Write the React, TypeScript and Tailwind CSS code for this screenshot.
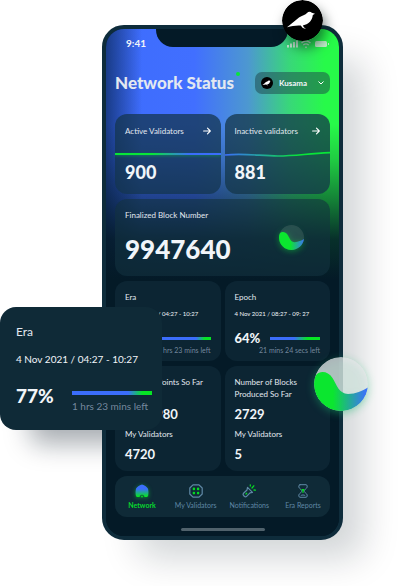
import React, { useId } from "react";

type BallProps = { className: string };

function Ball({ className }: BallProps) {
  const id = useId();
  return (
    <svg viewBox="0 0 54 54" className={className} aria-hidden="true">
      <defs>
        <linearGradient id={id} x1="0" y1="0" x2="1" y2="0">
          <stop offset="0.35" stopColor="#0be62f" />
          <stop offset="0.95" stopColor="#3b74f6" />
        </linearGradient>
      </defs>
      <circle cx="27" cy="27" r="27" fill="#e4e6e8" className="opacity-75" />
      <path
        d="M2 18C6 13.500 14 14 18.500 21C23 28.500 25 36.500 34 37C42 37 48 34 54 30.500C52 44 41 54 27 54C12 54 0 42 0 27C0 24 0.500 21 2 18Z"
        fill={`url(#${id})`}
      />
    </svg>
  );
}

function SmallBall({ className }: BallProps) {
  const id = useId();
  return (
    <svg viewBox="0 0 54 54" className={className} aria-hidden="true">
      <defs>
        <linearGradient id={id} x1="0" y1="0" x2="1" y2="0">
          <stop offset="0.45" stopColor="#0be62f" />
          <stop offset="1" stopColor="#3b74f6" />
        </linearGradient>
      </defs>
      <circle cx="27" cy="27" r="27" fill="#ffffff" className="opacity-10" />
      <path
        d="M2 18C6 13.500 14 14 18.500 21C23 28.500 25 36.500 34 37C42 37 48 34 54 30.500C52 44 41 54 27 54C12 54 0 42 0 27C0 24 0.500 21 2 18Z"
        fill={`url(#${id})`}
      />
    </svg>
  );
}

function Bird({ className }: { className: string }) {
  return (
    <svg viewBox="0 0 41 41" className={className} aria-hidden="true">
      <circle cx="20.500" cy="20.500" r="20.500" fill="#000" />
      <path
        d="M5 27.300L11.500 22L17 17.500C20 15.500 23.500 14.800 25 13C26.300 11.500 28.500 11.600 29.800 12.700L33 13.800L30.800 15C30.500 18.500 28.500 22.300 24.500 24.200L20.800 25.600L22 27.500L24 28.400L22.200 28.600L20.500 27.800L18.800 25.600C14.500 25.200 10 26 5 27.300Z"
        fill="#fff"
      />
    </svg>
  );
}

function Arrow() {
  return (
    <svg viewBox="0 0 8 8" className="size-2" fill="none" stroke="#fff" strokeWidth="1.1" strokeLinecap="round" strokeLinejoin="round" aria-hidden="true">
      <path d="M0.600 4H7.300M4.500 1.200L7.300 4L4.500 6.800" />
    </svg>
  );
}

function Bar({ className, green }: { className: string; green: "short" | "long" }) {
  return (
    <div
      className={`${className} ${
        green === "short"
          ? "bg-[linear-gradient(90deg,#3b6dfb_70%,#06e524_88%)]"
          : "bg-[linear-gradient(90deg,#3b6dfb_48%,#06e524_75%)]"
      }`}
    />
  );
}

function StatCard({ label, value, line, tint }: { label: string; value: string; line: React.ReactNode; tint: string }) {
  return (
    <section className={`h-20 rounded-xl px-[10px] pt-px ${tint}`}>
      <div className="flex h-8 items-center justify-between">
        <h2 className="text-[8px] text-slate-200">{label}</h2>
        <button type="button" aria-label={`Open ${label}`}>
          <Arrow />
        </button>
      </div>
      <div className="-mx-[10px] h-4">{line}</div>
      <p className="text-[18px] leading-[18px] font-black text-slate-100">{value}</p>
    </section>
  );
}

function TimeCard({ label, date, percent, left, green }: { label: string; date: string; percent: string; left: string; green: "short" | "long" }) {
  return (
    <section className="h-20 rounded-xl bg-[#0c2533] px-[10px] pt-[10px]">
      <h2 className="text-[8px] leading-3 text-slate-200">{label}</h2>
      <p className="mt-[6px] text-[6px] leading-[10px] whitespace-nowrap text-slate-100">{date}</p>
      <div className="mt-[11px] flex items-center justify-between">
        <p className="text-[13px] leading-4 font-black text-slate-100">{percent}</p>
        <Bar className="h-[3px] w-[50px]" green={green} />
      </div>
      <p className="text-right text-[7px] leading-[8px] whitespace-nowrap text-slate-400/80">{left}</p>
    </section>
  );
}

function PointsCard({ title, value, mine }: { title: string; value: string; mine: string }) {
  return (
    <section className="h-[105px] rounded-xl bg-[#0c2533] px-[10px] pt-[10px] text-[8px] leading-3 text-slate-200">
      <h2 className="h-6">{title}</h2>
      <p className="mt-[6px] text-[13px] leading-4 font-bold text-slate-100">{value}</p>
      <h3 className="mt-[6px]">My Validators</h3>
      <p className="mt-[6px] text-[13px] leading-4 font-bold text-slate-100">{mine}</p>
    </section>
  );
}

function HomeIcon() {
  return (
    <svg viewBox="0 0 14 14" className="size-[14px] drop-shadow-[0_1px_2px_#08e53888]" aria-hidden="true">
      <defs>
        <linearGradient id="home" x1="0" y1="0" x2="0" y2="1">
          <stop offset="0.35" stopColor="#3b6dfb" />
          <stop offset="0.95" stopColor="#06e524" />
        </linearGradient>
      </defs>
      <path d="M7 0.600C8.500 0.600 12.500 3.500 13 4.800C13.500 6.300 13.500 9.500 13.200 11.200C13 12.600 12.200 13 11 13H9.300V12.300C9.300 10.200 4.700 10.200 4.700 12.300V13H3C1.800 13 1 12.600 0.800 11.200C0.500 9.500 0.500 6.300 1 4.800C1.500 3.500 5.500 0.600 7 0.600Z" fill="url(#home)" />
      <circle cx="7" cy="12.600" r="0.900" fill="#06e524" />
    </svg>
  );
}

function ValidatorsIcon() {
  return (
    <svg viewBox="0 0 14 14" className="size-[14px]" fill="none" aria-hidden="true">
      <path d="M4 0.800H10L13.200 4V10L10 13.200H4L0.800 10V4Z" stroke="#5f88a5" strokeWidth="1.200" strokeLinejoin="round" />
      <g fill="#06d924">
        <circle cx="4.900" cy="4.900" r="1.300" />
        <circle cx="9.100" cy="4.900" r="1.300" />
        <circle cx="4.900" cy="9.100" r="1.300" />
        <circle cx="9.100" cy="9.100" r="1.300" />
      </g>
    </svg>
  );
}

function TorchIcon() {
  return (
    <svg viewBox="0 0 14 14" className="size-[14px]" fill="none" strokeLinecap="round" strokeLinejoin="round" aria-hidden="true">
      <path d="M5.500 3.300L10.500 8.300L8 8.800L4.600 12.300C3.300 13.700 0 11 1.500 9.300L5 6Z" stroke="#5f88a5" strokeWidth="1.200" />
      <path d="M4 10L4.700 9.300M8.300 2V0.800M10 4L11.800 1.800M12 6L13.400 6.200" stroke="#06d924" strokeWidth="1.300" />
    </svg>
  );
}

function HourglassIcon() {
  return (
    <svg viewBox="0 0 14 14" className="size-[14px]" fill="none" strokeLinecap="round" strokeLinejoin="round" aria-hidden="true">
      <path d="M4 0.700H10C11.500 0.700 11.500 3.200 10.700 4L8.200 6.400V7.600L10.700 10C11.500 10.800 11.500 13.300 10 13.300H4C2.500 13.300 2.500 10.800 3.300 10L5.800 7.600V6.400L3.300 4C2.500 3.200 2.500 0.700 4 0.700ZM5 11.500C5.800 10.700 8.200 10.700 9 11.500" stroke="#5f88a5" />
      <path d="M6 5.700H8L7 7ZM7 7V8.500" stroke="#06d924" strokeWidth="1.200" />
    </svg>
  );
}

const tabs = [
  { label: "Network", icon: <HomeIcon />, active: true },
  { label: "My Validators", icon: <ValidatorsIcon />, active: false },
  { label: "Notifications", icon: <TorchIcon />, active: false },
  { label: "Era Reports", icon: <HourglassIcon />, active: false },
];

export default function App() {
  return (
    <main className="relative min-h-screen overflow-hidden bg-white pt-[25px] pr-[67px] pb-[46px] pl-[102px] font-['Lato',sans-serif] text-white">
      <div className="absolute top-[330px] left-0 h-[100px] w-40 rounded-2xl shadow-[24px_20px_26px_-6px_rgba(5,20,35,0.35)]" />
      <div className="relative rounded-[22px] border-4 border-[#0e2c3b] bg-[#041a27] shadow-[28px_26px_36px_-8px_rgba(5,20,35,0.18)]">
        <div className="rounded-[18px] bg-[linear-gradient(180deg,#041a2700_0,#041a2700_95px,#041a2733_130px,#041a2788_170px,#041a27e6_210px,#041a27_250px),linear-gradient(90deg,#0c2a5cbb_0,#0c2a5c00_36px),linear-gradient(90deg,#3d6cfd_0%,#416fff_38%,#4d98d0_61%,#38d878_79%,#27fa49_94%)] px-[9px] pb-[5px]">
          <header className="relative flex h-[43px] items-start justify-between pt-[7px]">
            <time className="pl-[11px] text-[10px] leading-[14px] font-bold text-slate-100">9:41</time>
            <div className="absolute top-0 right-[42px] left-[41px] h-[18px] rounded-b-[17px] bg-[#041a27]" />
            <svg viewBox="0 0 42 10" className="mt-[3px] mr-px h-[10px] w-[42px] opacity-80" aria-hidden="true">
              <g fill="#e7ece9">
                <rect x="0" y="6" width="2" height="2.500" />
                <rect x="3" y="4.500" width="2" height="4" />
                <rect x="6" y="3" width="2" height="5.500" />
                <rect x="9" y="1.500" width="2" height="7" />
                <rect x="28" y="2" width="12" height="6" rx="1.500" />
                <rect x="41" y="4" width="1" height="2" />
              </g>
              <path d="M14.500 4C17 1.500 21 1.500 23.500 4M16.300 6C18 4.500 20 4.500 21.700 6M18.500 7.800L19 8.300L19.500 7.800" fill="none" stroke="#e7ece9" strokeWidth="1.300" />
            </svg>
          </header>

          <div className="flex h-[22px] items-center justify-between">
            <h1 className="relative text-[17px] leading-5 font-black whitespace-nowrap text-slate-200">
              Network Status
              <span className="absolute -top-px -right-[6px] size-1 rounded-full bg-[#08e538]" />
            </h1>
            <button type="button" className="flex h-[22px] w-[75px] shrink-0 items-center rounded-[7px] bg-[#1b414a]/50 px-[6px] text-[8px] font-bold text-slate-100">
              <Bird className="size-3" />
              <span className="ml-[6px] flex-1 text-left">Kusama</span>
              <svg viewBox="0 0 6 4" className="h-1 w-[6px]" fill="none" stroke="#fff" aria-hidden="true">
                <path d="M0.500 0.500L3 3L5.500 0.500" />
              </svg>
            </button>
          </div>

          <div className="mt-5 grid grid-cols-2 gap-1">
            <StatCard
              label="Active Validators"
              value="900"
              tint="bg-[#14364f]/75"
              line={<div className="h-2 pt-[6px]"><div className="h-[2px] bg-[linear-gradient(90deg,#08e538_35%,#3b6dfb_70%)] shadow-[0_1px_3px_#08e53866]" /></div>}
            />
            <StatCard
              label="Inactive validators"
              value="881"
              tint="bg-[#14364a]/75"
              line={
                <svg viewBox="0 0 104 16" preserveAspectRatio="none" className="block h-4 w-full" fill="none" aria-hidden="true">
                  <defs>
                    <linearGradient id="trend" gradientUnits="userSpaceOnUse" x1="0" y1="0" x2="104" y2="0">
                      <stop stopColor="#3b6dfb" />
                      <stop offset="0.700" stopColor="#08e538" />
                    </linearGradient>
                  </defs>
                  <path d="M0 8C20 6 35 9 52 9S78 7 104 5.500" stroke="url(#trend)" strokeWidth="1.700" />
                </svg>
              }
            />
            <section className="col-span-2 mt-px flex h-[77px] justify-between rounded-xl bg-[#123240]/60 pt-[10px] pr-[26px] pl-[10px]">
              <div>
                <h2 className="text-[8px] leading-3 text-slate-200">Finalized Block Number</h2>
                <p className="mt-[14px] text-[26px] leading-7 font-black text-slate-100">9947640</p>
              </div>
              <SmallBall className="mt-4 size-[25px] drop-shadow-[0_1px_3px_#08e53877]" />
            </section>
          </div>

          <div className="mt-[5px] grid grid-cols-2 gap-x-1 gap-y-[5px]">
            <TimeCard label="Era" date="4 Nov 2021 / 04:27 - 10:27" percent="77%" left="1 hrs 23 mins left" green="short" />
            <TimeCard label="Epoch" date="4 Nov 2021 / 08:27 - 09: 27" percent="64%" left="21 mins 24 secs left" green="long" />
            <PointsCard title="Total Era Points So Far" value="3340980" mine="4720" />
            <PointsCard title="Number of Blocks Produced So Far" value="2729" mine="5" />
          </div>

          <nav className="mt-[5px] flex h-[41px] items-center justify-between rounded-xl bg-[#0f2a37] px-[5px]">
            {tabs.map((tab) => (
              <button
                key={tab.label}
                type="button"
                className={`flex min-w-11 flex-col items-center gap-[2px] text-[7px] leading-[10px] whitespace-nowrap ${tab.active ? "font-bold text-[#08d52e]" : "text-[#5f88a5]"}`}
              >
                {tab.icon}
                {tab.label}
              </button>
            ))}
          </nav>
          <div className="mx-auto mt-[11px] h-[3px] w-[84px] rounded-full bg-[#50626c]" />
        </div>

        <Bird className="absolute -top-[29px] right-4 size-[41px] rounded-full shadow-[3px_7px_12px_rgba(0,20,15,0.5)]" />
        <Ball className="absolute top-[328px] -right-[29px] size-[54px] rounded-full drop-shadow-[0_2px_4px_#18b86d77]" />
      </div>

      <aside className="absolute top-[307px] left-0 h-[123px] w-[162px] rounded-2xl bg-[#0f2a37] px-4 pt-4">
        <h2 className="text-[12px] leading-[18px] text-slate-200">Era</h2>
        <p className="mt-[10px] text-[10px] leading-4 whitespace-nowrap text-slate-100">4 Nov 2021 / 04:27 - 10:27</p>
        <div className="mt-3 flex justify-between">
          <p className="pt-[5px] text-[19px] leading-6 font-black text-slate-100">77%</p>
          <div className="-mr-[6px] w-20 pt-3">
            <Bar className="h-1 w-full" green="short" />
            <p className="mt-[3px] text-[10px] leading-4 whitespace-nowrap text-slate-400/80">1 hrs 23 mins left</p>
          </div>
        </div>
      </aside>
    </main>
  );
}
